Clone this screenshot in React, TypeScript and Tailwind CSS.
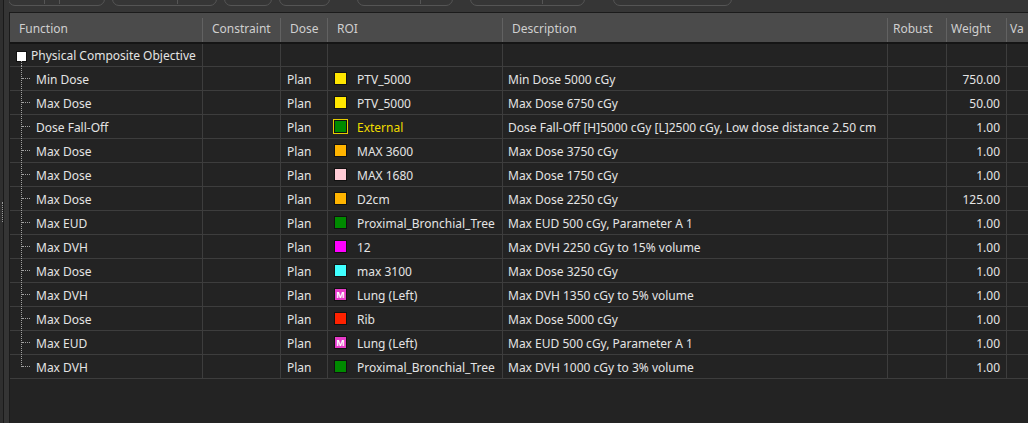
import React from "react";

type Row = {
  fn: string;
  roi: string;
  color: string;
  desc: string;
  weight: string;
  mark?: boolean;
  highlight?: boolean;
};

const ROWS: Row[] = [
  { fn: "Min Dose", roi: "PTV_5000", color: "#ffe600", desc: "Min Dose 5000 cGy", weight: "750.00" },
  { fn: "Max Dose", roi: "PTV_5000", color: "#ffe600", desc: "Max Dose 6750 cGy", weight: "50.00" },
  {
    fn: "Dose Fall-Off",
    roi: "External",
    color: "#008a00",
    desc: "Dose Fall-Off [H]5000 cGy [L]2500 cGy, Low dose distance 2.50 cm",
    weight: "1.00",
    highlight: true,
  },
  { fn: "Max Dose", roi: "MAX 3600", color: "#ffb400", desc: "Max Dose 3750 cGy", weight: "1.00" },
  { fn: "Max Dose", roi: "MAX 1680", color: "#ffccd6", desc: "Max Dose 1750 cGy", weight: "1.00" },
  { fn: "Max Dose", roi: "D2cm", color: "#ffb400", desc: "Max Dose 2250 cGy", weight: "125.00" },
  { fn: "Max EUD", roi: "Proximal_Bronchial_Tree", color: "#008a00", desc: "Max EUD 500 cGy, Parameter A 1", weight: "1.00" },
  { fn: "Max DVH", roi: "12", color: "#ff00ff", desc: "Max DVH 2250 cGy to 15% volume", weight: "1.00" },
  { fn: "Max Dose", roi: "max 3100", color: "#40ffff", desc: "Max Dose 3250 cGy", weight: "1.00" },
  { fn: "Max DVH", roi: "Lung (Left)", color: "#e63cc8", desc: "Max DVH 1350 cGy to 5% volume", weight: "1.00", mark: true },
  { fn: "Max Dose", roi: "Rib", color: "#ff2200", desc: "Max Dose 5000 cGy", weight: "1.00" },
  { fn: "Max EUD", roi: "Lung (Left)", color: "#e63cc8", desc: "Max EUD 500 cGy, Parameter A 1", weight: "1.00", mark: true },
  { fn: "Max DVH", roi: "Proximal_Bronchial_Tree", color: "#008a00", desc: "Max DVH 1000 cGy to 3% volume", weight: "1.00" },
];

const COLS = "grid grid-cols-[193px_78px_47px_175px_385px_59px_60px_1fr]";

// visible lower edges of the toolbar buttons above the grid
const TOOLBAR = [
  { w: "w-[97px]", ml: "ml-[-1px]", tick: [35, 50] },
  { w: "w-[105px]", ml: "ml-[7px]", tick: [64] },
  { w: "w-[48px]", ml: "ml-[7px]", tick: [] },
  { w: "w-[51px]", ml: "ml-[7px]", tick: [] },
  { w: "w-[96px]", ml: "ml-[27px]", tick: [62] },
  { w: "w-[115px]", ml: "ml-[17px]", tick: [71] },
  { w: "w-[119px]", ml: "ml-[28px]", tick: [] },
];

export default function App() {
  return (
    <div
      className="flex h-[423px] w-[1028px] overflow-hidden bg-[#363636] text-[12px] text-[#e4e4e4]"
      style={{ fontFamily: '"Noto Sans", "Open Sans", sans-serif' }}
    >
      <Splitter />
      <div className="flex min-w-0 flex-1 flex-col">
        <Toolbar />
        <div className="flex flex-1 flex-col border-l border-t border-[#1b1b1b] bg-[#232323]">
          <Header />
          <div className={`${COLS} h-[23px] border-b border-[#3d3d3d]`}>
            <div className="relative flex items-center border-r border-[#3d3d3d] pl-[6px] pt-[2px]">
              <span className="mr-[4px] h-[11px] w-[11px] border border-[#111] bg-white" />
              <span className="whitespace-nowrap">Physical Composite Objective</span>
              <span className="absolute bottom-0 left-[11px] h-[5px] border-l border-dotted border-[#a0a0a0]" />
            </div>
            <Cells />
          </div>
          {ROWS.map((r, i) => (
            <ObjectiveRow key={i} row={r} last={i === ROWS.length - 1} />
          ))}
        </div>
      </div>
    </div>
  );
}

function Splitter() {
  return (
    <div className="flex h-full w-[9px] shrink-0">
      <div className="flex w-[3px] flex-col justify-center bg-[#2f2f2f]">
        <div className="ml-[2px] h-[20px] border-l border-dotted border-[#9a9a9a]" />
      </div>
      <div className="w-[1px] bg-[#1a1a1a]" />
      <div className="w-[5px] bg-[#353535]" />
    </div>
  );
}

function Toolbar() {
  return (
    <div className="flex h-[12px] shrink-0 overflow-hidden bg-[#363636]">
      {TOOLBAR.map((b, i) => (
        <div
          key={i}
          className={`relative -mt-[14px] h-[20px] shrink-0 rounded-[7px] border border-[#555] ${b.w} ${b.ml}`}
        >
          {b.tick.map((t) => (
            <span
              key={t}
              className="absolute bottom-[1px] h-[4px] border-l border-[#555]"
              style={{ left: t }}
            />
          ))}
        </div>
      ))}
    </div>
  );
}

function Header() {
  const heads = ["Function", "Constraint", "Dose", "ROI", "Description", "Robust", "Weight", "Va"];
  const pads = ["pl-[9px]", "pl-[9px]", "pl-[9px]", "pl-[9px]", "pl-[9px]", "pl-[5px]", "pl-[4px]", "pl-[3px]"];
  return (
    <div className={`${COLS} h-[31px] shrink-0 border-b-2 border-[#151515] bg-[#4b4b4b] text-[#cfcfcf]`}>
      {heads.map((h, i) => (
        <div key={h} className={`relative flex items-center overflow-hidden whitespace-nowrap pt-[3px] ${pads[i]}`}>
          {h}
          {i < heads.length - 1 && (
            <span className="absolute right-0 top-[5px] bottom-0 border-r border-[#626262]" />
          )}
        </div>
      ))}
    </div>
  );
}

function Cells() {
  return (
    <>
      {[0, 1, 2, 3, 4, 5].map((i) => (
        <div key={i} className="border-r border-[#3d3d3d]" />
      ))}
      <div />
    </>
  );
}

function ObjectiveRow({ row, last }: { row: Row; last: boolean }) {
  return (
    <div className={`${COLS} h-[24px] border-b border-[#3d3d3d]`}>
      <div className="flex items-stretch border-r border-[#3d3d3d] pl-[11px]">
        <div className="relative w-[15px] shrink-0">
          <span
            className={`absolute left-0 top-[-1px] border-l border-dotted border-[#a0a0a0] ${last ? "h-[13px]" : "h-[25px]"}`}
          />
          <span className="absolute left-[1px] top-[11px] w-[8px] border-t border-dotted border-[#a0a0a0]" />
        </div>
        <span className="self-center whitespace-nowrap pt-[2px]">{row.fn}</span>
      </div>
      <div className="border-r border-[#3d3d3d]" />
      <div className="flex items-center border-r border-[#3d3d3d] pl-[6px] pt-[2px]">Plan</div>
      <div className="flex items-center overflow-hidden border-r border-[#3d3d3d] pl-[6px]">
        <Swatch row={row} />
        <span className={`ml-[10px] whitespace-nowrap pt-[2px] ${row.highlight ? "text-[#f0dc00]" : ""}`}>
          {row.roi}
        </span>
      </div>
      <div className="flex items-center overflow-hidden whitespace-nowrap border-r border-[#3d3d3d] pl-[5px] pt-[2px]">
        {row.desc}
      </div>
      <div className="border-r border-[#3d3d3d]" />
      <div className="flex items-center justify-end border-r border-[#3d3d3d] pr-[6px] pt-[2px]">{row.weight}</div>
      <div />
    </div>
  );
}

function Swatch({ row }: { row: Row }) {
  if (row.highlight) {
    return (
      <span className="-ml-[1px] mr-[-1px] flex h-[15px] w-[15px] shrink-0 border border-[#e6cc00]">
        <span className="flex-1 border border-[#111]" style={{ backgroundColor: row.color }} />
      </span>
    );
  }
  return (
    <span
      className="flex h-[13px] w-[13px] shrink-0 items-center justify-center border border-[#111] text-[9px] font-bold leading-none text-white"
      style={{ backgroundColor: row.color }}
    >
      {row.mark ? "M" : null}
    </span>
  );
}
